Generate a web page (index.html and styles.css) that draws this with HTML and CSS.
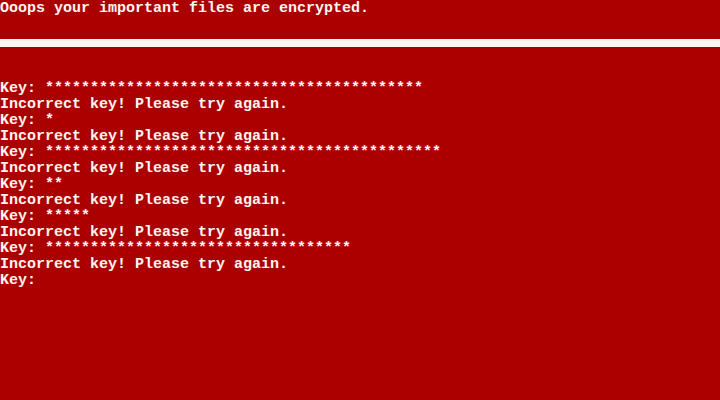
FILE: index.html
```html
<!DOCTYPE html>
<html lang="en">

<head>
    <meta charset="UTF-8">
    <meta name="viewport" content="width=device-width, initial-scale=1.0">
    <title>Ooops</title>
    <link rel="stylesheet" href="styles.css">
</head>

<body>
    <div class="screen">
        <div class="row">Ooops your important files are encrypted.</div>
        <div class="row"></div>
        <div class="row rule"><div class="bar"></div></div>
        <div class="row"></div>
        <div class="row"></div>

        <div class="row">Key: ******************************************</div>
        <div class="row">Incorrect key! Please try again.</div>
        <div class="row">Key: *</div>
        <div class="row">Incorrect key! Please try again.</div>
        <div class="row">Key: ********************************************</div>
        <div class="row">Incorrect key! Please try again.</div>
        <div class="row">Key: **</div>
        <div class="row">Incorrect key! Please try again.</div>
        <div class="row">Key: *****</div>
        <div class="row">Incorrect key! Please try again.</div>
        <div class="row">Key: **********************************</div>
        <div class="row">Incorrect key! Please try again.</div>
        <div class="row">Key:</div>
    </div>
</body>

</html>
```

FILE: styles.css
```css
:root {
    --vga-red: #aa0000;
    --vga-white: #fdf6f2;
}

* {
    margin: 0;
    padding: 0;
    box-sizing: border-box;
}

html,
body {
    height: 100%;
    background-color: var(--vga-red);
}

.screen {
    width: 720px;
    height: 400px;
    overflow: hidden;
    color: var(--vga-white);
    font-family: 'Liberation Mono', 'DejaVu Sans Mono', monospace;
    font-weight: bold;
    font-size: 15px;
    line-height: 16px;
}

/* one text-mode row: 16px tall, 9px per character */
.row {
    height: 16px;
    padding-top: 1px;
    white-space: pre;
}

.rule {
    display: flex;
    flex-direction: column;
    justify-content: flex-end;
    padding-top: 0;
    padding-bottom: 1px;
}

.bar {
    height: 8px;
    background-color: var(--vga-white);
}
```
